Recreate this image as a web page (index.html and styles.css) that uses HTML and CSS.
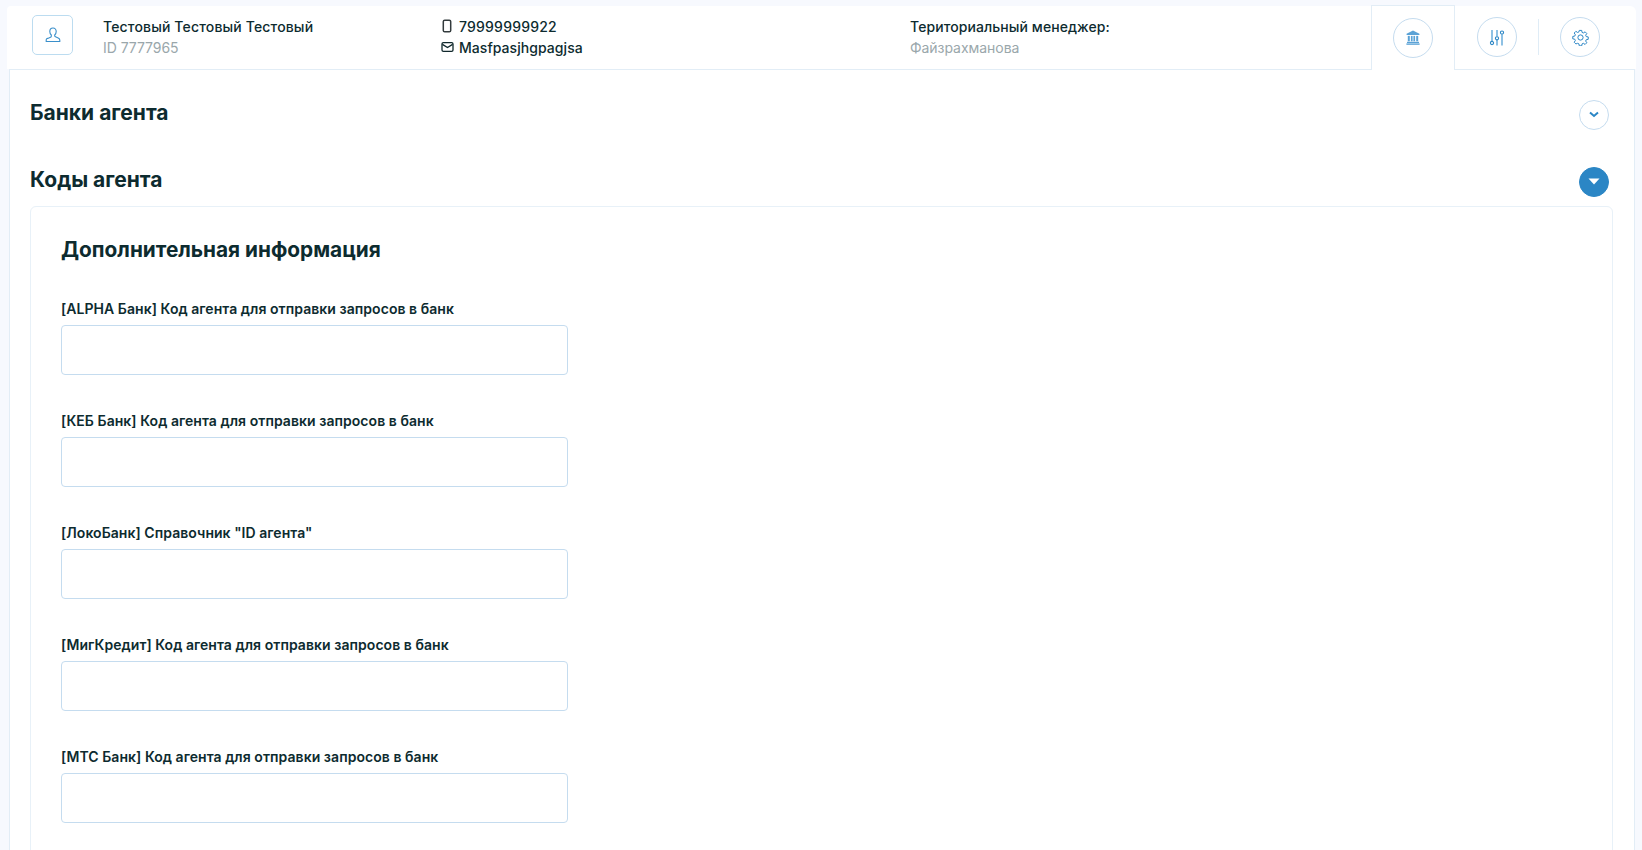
FILE: index.html
```html
<!DOCTYPE html>
<html lang="ru">
<head>
    <meta charset="UTF-8">
    <meta name="viewport" content="width=device-width, initial-scale=1.0">
    <title>Агент</title>
    <link rel="stylesheet" href="styles.css">
</head>
<body>

<header class="agent-bar">
    <div class="avatar">
        <svg width="16" height="16" viewBox="0 0 16 16" fill="none" stroke="#3a8fca" stroke-width="1.100">
            <path d="M8 1C6 1 4.800 2.500 4.800 4.500c0 1.500.6 2.700 1.500 3.500v1.300c0 .5-.3.8-.8 1l-2.700 1.100C1.800 11.300 1.200 12 1.200 13v1.500h13.600V13c0-1-.6-1.700-1.600-2.100l-2.700-1.100c-.5-.2-.8-.5-.8-1V8c.9-.8 1.500-2 1.500-3.500C11.200 2.500 10 1 8 1z"/>
        </svg>
    </div>

    <div class="agent-name">
        <div class="strong-line">Тестовый Тестовый Тестовый</div>
        <div class="muted-line">ID 7777965</div>
    </div>

    <div class="agent-contacts">
        <div class="contact phone">
            <svg width="13" height="14" viewBox="0 0 13 14" fill="none" stroke="#333b3d" stroke-width="1.500">
                <rect x="2.300" y="1.200" width="7.400" height="11.600" rx="1.400"/>
            </svg>
            <span>79999999922</span>
        </div>
        <div class="contact">
            <svg width="13" height="12" viewBox="0 0 13 12" fill="none" stroke="#10282c" stroke-width="1.300">
                <rect x="1" y="1.700" width="11" height="8.600" rx="1.400"/>
                <path d="M1.400 3.400l5.100 3.200 5.100-3.200"/>
            </svg>
            <span>Masfpasjhgpagjsa</span>
        </div>
    </div>

    <div class="agent-manager">
        <div class="strong-line">Териториальный менеджер:</div>
        <div class="muted-line">Файзрахманова</div>
    </div>

    <nav class="tabs">
        <div class="tab active">
            <span class="circle">
                <svg width="14" height="15" viewBox="0 0 14 15" fill="#5aa2d6">
                    <path d="M7 .4L.6 3.800v1.300h12.800V3.800z"/>
                    <rect x="1.800" y="5.900" width="2" height="5.400"/>
                    <rect x="4.900" y="5.900" width="1.700" height="5.400"/>
                    <rect x="7.400" y="5.900" width="1.700" height="5.400"/>
                    <rect x="10.200" y="5.900" width="2" height="5.400"/>
                    <rect x="1" y="11.800" width="12" height="1.200"/>
                    <rect x=".4" y="13.400" width="13.200" height="1.400"/>
                </svg>
            </span>
        </div>
        <div class="tab">
            <span class="circle">
                <svg width="16" height="17" viewBox="0 0 16 17" fill="none">
                    <path d="M3 1v11.500M8 1v6.500M8 11v5.500M13 5.500v11" stroke="#6aaddc" stroke-width="1.500"/>
                    <circle cx="3" cy="14" r="1.600" stroke="#2b86c5" stroke-width="1.100"/>
                    <circle cx="8" cy="9.300" r="1.600" stroke="#2b86c5" stroke-width="1.100"/>
                    <circle cx="13" cy="3.600" r="1.600" stroke="#2b86c5" stroke-width="1.100"/>
                </svg>
            </span>
        </div>
        <div class="tab-divider"></div>
        <div class="tab last">
            <span class="circle">
                <svg width="17" height="17" viewBox="0 0 24 24" fill="none" stroke="#2b86c5" stroke-width="1.400" stroke-linejoin="round">
                    <circle cx="12" cy="12" r="3.700"/>
                    <path d="M10.300 2h3.400l.5 2.800 1.900.8 2.400-1.600 2.400 2.400-1.600 2.400.8 1.900 2.800.5v3.400l-2.800.5-.8 1.900 1.600 2.400-2.400 2.400-2.400-1.600-1.900.8-.5 2.800h-3.400l-.5-2.800-1.900-.8L5.500 21.100l-2.400-2.400 1.600-2.400-.8-1.900-2.800-.5V10.500l2.800-.5.8-1.900-1.600-2.400L5.500 3.300l2.400 1.600 1.900-.8z"/>
                </svg>
            </span>
        </div>
    </nav>
</header>

<main class="panel">
    <!-- Банки -->
    <section class="section-head first">
        <h2>Банки агента</h2>
        <button class="toggle">
            <svg width="10" height="7" viewBox="0 0 10 7" fill="none" stroke="#2b86c5" stroke-width="2">
                <path d="M1 1.500l4 3.500 4-3.500"/>
            </svg>
        </button>
    </section>

    <!-- Коды -->
    <section class="section-head second">
        <h2>Коды агента</h2>
        <button class="toggle open">
            <svg width="12" height="7" viewBox="0 0 12 7" fill="#fff">
                <path d="M.5 .5h11L6 6.500z"/>
            </svg>
        </button>
    </section>

    <div class="card">
        <h3>Дополнительная информация</h3>

        <div class="field">
            <label>[ALPHA Банк] Код агента для отправки запросов в банк</label>
            <input type="text">
        </div>
        <div class="field">
            <label>[КЕБ Банк] Код агента для отправки запросов в банк</label>
            <input type="text">
        </div>
        <div class="field">
            <label>[ЛокоБанк] Справочник "ID агента"</label>
            <input type="text">
        </div>
        <div class="field">
            <label>[МигКредит] Код агента для отправки запросов в банк</label>
            <input type="text">
        </div>
        <div class="field">
            <label>[МТС Банк] Код агента для отправки запросов в банк</label>
            <input type="text">
        </div>
    </div>
</main>

</body>
</html>
```

FILE: styles.css
```css
* {
    margin: 0;
    padding: 0;
    box-sizing: border-box;
}
body {
    font-family: 'Inter', 'Noto Sans', sans-serif;
    background-color: #f7f9fe;
    color: #0d2b2f;
    padding: 6px 6px 0 7px;
    font-size: 14px;
}

/* Top bar */
.agent-bar {
    display: flex;
    align-items: center;
    height: 63px;
    background-color: #ffffff;
    border-radius: 4px 6px 0 0;
    padding-left: 25px;
    position: relative;
    z-index: 1;
}
.avatar {
    width: 41px;
    height: 40px;
    margin-bottom: 6px;
    border: 1px solid #bcdcf0;
    border-radius: 5px;
    display: flex;
    align-items: center;
    justify-content: center;
}
.agent-name {
    margin-left: 30px;
    width: 338px;
    margin-bottom: 2px;
}
.agent-name .strong-line {
    letter-spacing: .15px;
}
.agent-contacts {
    width: 469px;
    margin-bottom: 2px;
}
.agent-manager {
    flex: 1;
    margin-bottom: 2px;
}
.strong-line {
    font-size: 14px;
    font-weight: 500;
    line-height: 21px;
}
.agent-manager .strong-line {
    letter-spacing: .08px;
}
.muted-line {
    font-size: 14px;
    color: #9aa7ab;
    line-height: 21px;
    letter-spacing: -.05px;
}
.contact {
    display: flex;
    align-items: center;
    gap: 5px;
    font-size: 14px;
    font-weight: 500;
    line-height: 21px;
}
.contact span {
    letter-spacing: .05px;
}
.contact.phone span {
    letter-spacing: .2px;
}

/* Tabs */
.tabs {
    display: flex;
    align-items: center;
    height: 64px;
    align-self: flex-start;
    margin-top: -1px;
    margin-right: 36px;
}
.tab {
    width: 84px;
    height: 100%;
    display: flex;
    align-items: center;
    justify-content: center;
}
.tab.active {
    background-color: #fff;
    border: 1px solid #e2edf6;
    border-bottom: none;
    height: 65px;
}
.tab.last {
    width: auto;
    margin-left: 21px;
}
.tab-divider {
    width: 1px;
    height: 36px;
    background-color: #dfecf6;
    margin-left: -1px;
}
.circle {
    width: 40px;
    height: 40px;
    border: 1px solid #c5dcef;
    border-radius: 50%;
    display: flex;
    align-items: center;
    justify-content: center;
}

/* Main panel */
.panel {
    margin: 0 1px 0 2px;
    background-color: #ffffff;
    border: 1px solid #e2edf6;
    border-bottom: none;
    padding: 0 21px 40px 20px;
}
.section-head {
    display: flex;
    align-items: center;
    justify-content: space-between;
    height: 30px;
}
.section-head.first {
    margin-top: 28px;
}
.section-head.second {
    margin-top: 37px;
}
.section-head h2 {
    font-size: 21px;
    font-weight: 700;
    line-height: 30px;
}
.toggle {
    width: 30px;
    height: 30px;
    margin-top: 3px;
    margin-right: 4px;
    border-radius: 50%;
    border: 1px solid #c5dcef;
    background-color: #fff;
    display: flex;
    align-items: center;
    justify-content: center;
}
.toggle.open {
    background-color: #2b86c5;
    border-color: #2b86c5;
}

/* Card with fields */
.card {
    margin-top: 11px;
    border: 1px solid #e8f1f8;
    border-radius: 6px;
    padding: 28px 30px 40px 30px;
}
.card h3 {
    font-size: 20.800px;
    font-weight: 700;
    line-height: 30px;
    margin-bottom: 35px;
}
.field {
    margin-bottom: 37px;
}
.field label {
    display: block;
    font-size: 14px;
    font-weight: 600;
    line-height: 18px;
    letter-spacing: .05px;
    margin-bottom: 7px;
}
.field input {
    display: block;
    width: 507px;
    height: 50px;
    border: 1px solid #c5dcef;
    border-radius: 4px;
    background-color: #fff;
}
```
